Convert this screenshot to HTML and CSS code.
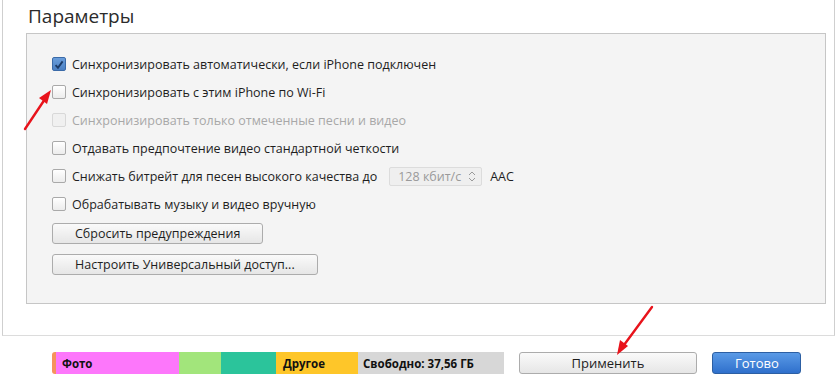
FILE: index.html
```html
<!DOCTYPE html>
<html lang="ru">
<head>
    <meta charset="UTF-8">
    <meta name="viewport" content="width=device-width, initial-scale=1.0">
    <title>Параметры</title>
    <link rel="stylesheet" href="styles.css">
</head>
<body>
    <div class="window">
        <h1>Параметры</h1>
        <div class="panel">
            <label class="row">
                <span class="box checked">
                    <svg width="14" height="14" viewBox="0 0 14 14"><path d="M3 7.2 L5.8 10.2 L11.2 2.8" fill="none" stroke="#1b3a66" stroke-width="2.2"/></svg>
                </span>
                Синхронизировать автоматически, если iPhone подключен
            </label>
            <label class="row">
                <span class="box"></span>
                Синхронизировать с этим iPhone по Wi-Fi
            </label>
            <label class="row disabled">
                <span class="box"></span>
                Синхронизировать только отмеченные песни и видео
            </label>
            <label class="row">
                <span class="box"></span>
                Отдавать предпочтение видео стандартной четкости
            </label>
            <div class="row">
                <span class="box"></span>
                Снижать битрейт для песен высокого качества до
                <span class="select">128 кбит/с <span class="spin">
                    <svg width="8" height="11" viewBox="0 0 8 11"><path d="M1 4 L4 1 L7 4 M1 7 L4 10 L7 7" fill="none" stroke="#9a9a9a" stroke-width="1"/></svg>
                </span></span>
                <span class="aac">AAC</span>
            </div>
            <label class="row">
                <span class="box"></span>
                Обрабатывать музыку и видео вручную
            </label>
            <button class="btn">Сбросить предупреждения</button>
            <button class="btn">Настроить Универсальный доступ...</button>
        </div>
    </div>

    <div class="footer">
        <div class="storage">
            <span class="seg s-orange"></span>
            <span class="seg s-pink">Фото</span>
            <span class="seg s-green"></span>
            <span class="seg s-teal"></span>
            <span class="seg s-yellow">Другое</span>
            <span class="seg s-free">Свободно: 37,56 ГБ</span>
        </div>
        <button class="btn apply">Применить</button>
        <button class="btn done">Готово</button>
    </div>

    <svg class="arrows" width="837" height="390" viewBox="0 0 837 390">
        <g stroke="#e8131b" stroke-width="2.4" fill="#e8131b" stroke-linecap="round">
            <line x1="25" y1="129" x2="45" y2="99"/>
            <polygon points="51,90 47,104 39,98" stroke="none"/>
            <line x1="652" y1="307" x2="624" y2="345"/>
            <polygon points="617,355 620,340 628,346" stroke="none"/>
        </g>
    </svg>
</body>
</html>
```

FILE: styles.css
```css
body {
    margin: 0;
    font-family: "Open Sans", "Noto Sans", sans-serif;
    font-size: 12.5px;
    color: #222;
    background: #fff;
    position: relative;
    height: 390px;
    overflow: hidden;
}
.window {
    margin-left: 2px;
    width: 833px;
    height: 336px;
    border-left: 1px solid #cfcfcf;
    border-right: 1px solid #cfcfcf;
    border-bottom: 1px solid #dcdcdc;
    padding: 0 8px 0 23px;
    box-sizing: border-box;
}
h1 {
    margin: 0;
    padding: 2px 0 0 2px;
    height: 33px;
    box-sizing: border-box;
    font-size: 19px;
    font-weight: 400;
    color: #2b2b2b;
    line-height: 28px;
}
.panel {
    background: #f4f4f4;
    border: 1px solid #c6c6c6;
    height: 271px;
    box-sizing: border-box;
    padding: 16px 25px 0;
    display: flex;
    flex-direction: column;
    align-items: flex-start;
}
.row {
    height: 28px;
    display: flex;
    align-items: center;
    gap: 6px;
    color: #1e1e1e;
}
.row.disabled {
    color: #a8a8a8;
}
.box {
    width: 14px;
    height: 14px;
    box-sizing: border-box;
    border: 1px solid #a9a9a9;
    border-radius: 2px;
    background: linear-gradient(#ffffff, #ececec);
    display: inline-flex;
}
.row.disabled .box {
    border-color: #d8d8d8;
    background: #f0f0f0;
}
.box.checked {
    background: linear-gradient(#6a9edb, #4a7fc2);
    border-color: #3a6aa8;
}
.select {
    margin-left: 6px;
    height: 19px;
    width: 93px;
    box-sizing: border-box;
    border: 1px solid #dcdcdc;
    border-radius: 2px;
    background: #efefef;
    color: #9a9a9a;
    display: flex;
    align-items: center;
    justify-content: space-between;
    padding: 0 5px 0 8px;
}
.spin {
    display: flex;
}
.aac {
    margin-left: 2px;
    color: #1e1e1e;
}
.btn {
    font-family: inherit;
    font-size: 12.5px;
    color: #1e1e1e;
    border: 1px solid #acacac;
    border-radius: 3px;
    background: linear-gradient(#fafafa, #e6e6e6);
    height: 21px;
    padding: 0 22px;
    line-height: 19px;
}
.panel .btn {
    margin-top: 5px;
}
.panel .btn + .btn {
    margin-top: 10px;
}
.footer {
    display: flex;
    align-items: center;
    padding: 16px 0 0 52px;
}
.storage {
    display: flex;
    height: 22px;
    width: 452px;
    font-size: 11.5px;
    font-weight: 700;
    color: #111;
}
.seg {
    display: flex;
    align-items: center;
    padding-left: 6px;
    box-sizing: border-box;
}
.s-orange { width: 4px; padding: 0; background: #f6935c; border-radius: 3px 0 0 3px; }
.s-pink { width: 123px; background: #fd77fb; }
.s-green { width: 42px; background: #a2e57b; }
.s-teal { width: 55px; background: #2bc49b; }
.s-yellow { width: 82px; background: #fec629; padding-left: 7px; }
.s-free { width: 146px; background: #d7d7d7; padding-left: 5px; }
.apply {
    margin-left: 15px;
    width: 178px;
    height: 22px;
    font-size: 13px;
}
.done {
    margin-left: 15px;
    width: 89px;
    height: 22px;
    font-size: 13px;
    color: #fff;
    border-color: #2c5fa3;
    background: linear-gradient(#5a9ae6, #2f70cc);
}
.arrows {
    position: absolute;
    left: 0;
    top: 0;
    pointer-events: none;
}
```
